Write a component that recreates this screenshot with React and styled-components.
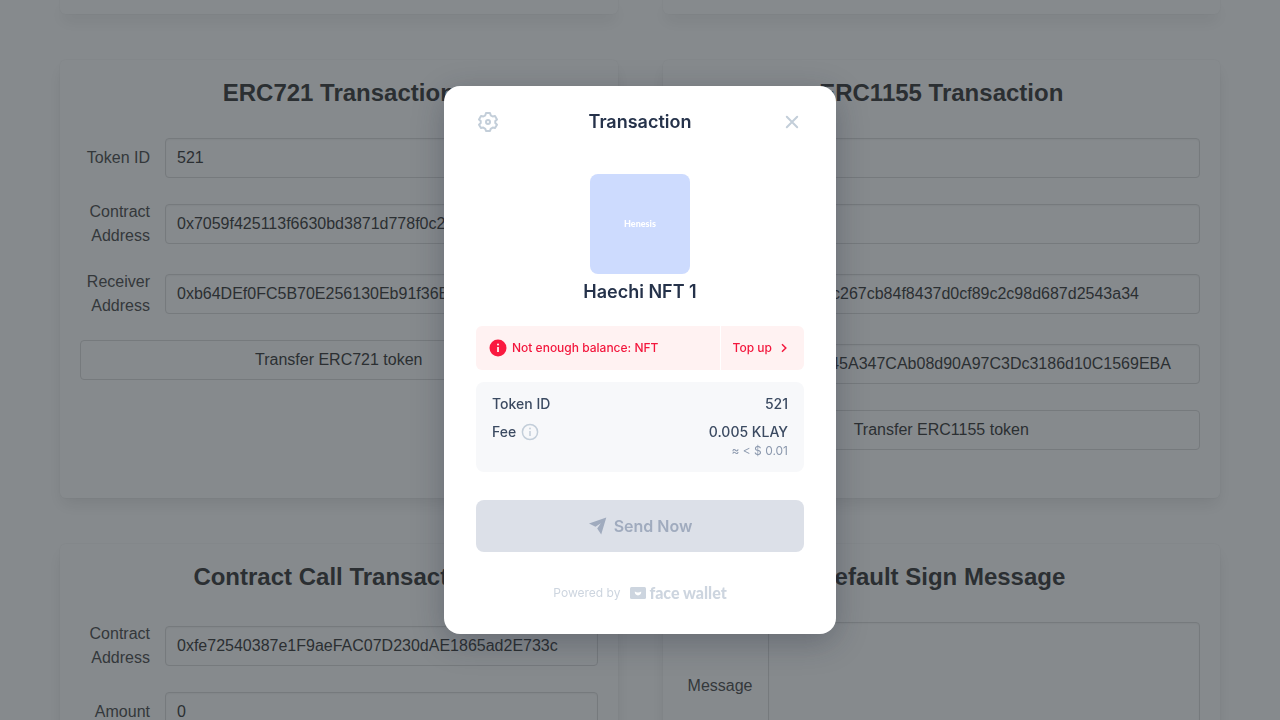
import React from "react";
import styled, { createGlobalStyle } from "styled-components";

const GlobalStyle = createGlobalStyle`
  *, *::before, *::after { box-sizing: border-box; }
  body {
    margin: 0;
    background: #ffffff;
    color: #4a4a4a;
    font-family: "Liberation Sans", Arial, sans-serif;
    font-size: 16px;
    line-height: 24px;
  }
  button, input, textarea { font: inherit; margin: 0; }
  h1, h2, p, dl, dd { margin: 0; }
`;

const Page = styled.main`
  height: 100vh;
  overflow: hidden;
  padding: 0 60px;
`;

const Grid = styled.div`
  display: grid;
  grid-template-columns: repeat(2, minmax(0, 1fr));
  gap: 46px 45px;
`;

const Card = styled.section`
  padding: 20px 20px 48px;
  border-radius: 6px;
  background: #ffffff;
  box-shadow: 0 8px 16px -2px rgba(10, 10, 10, 0.1), 0 0 0 1px rgba(10, 10, 10, 0.02);
`;

const CardEnd = styled(Card)`
  height: 14px;
  padding: 0;
  border-radius: 0 0 6px 6px;
`;

const CardTitle = styled.h2`
  margin-bottom: 32px;
  color: #363636;
  font-size: 24px;
  font-weight: 700;
  line-height: 26px;
  text-align: center;
`;

const Fields = styled.div`
  display: flex;
  flex-direction: column;
  gap: 22px;
`;

const Field = styled.div`
  display: flex;
  align-items: center;
  gap: 15px;
`;

const Label = styled.label`
  flex: 0 0 70px;
  text-align: right;
`;

const Input = styled.input`
  flex: 1;
  min-width: 0;
  height: 40px;
  padding: 0 11px;
  border: 1px solid #dbdbdb;
  border-radius: 4px;
  background: #ffffff;
  color: #363636;
  box-shadow: inset 0 1px 2px rgba(10, 10, 10, 0.05);
`;

const TextArea = styled(Input)`
  height: 128px;
  padding: 10px 11px;
  resize: none;
`;

const PlainButton = styled.button`
  height: 40px;
  padding: 0 16px;
  border: 1px solid #dbdbdb;
  border-radius: 4px;
  background: #ffffff;
  color: #363636;
`;

const Overlay = styled.div`
  position: fixed;
  inset: 0;
  display: flex;
  align-items: center;
  justify-content: center;
  background: rgba(35, 41, 48, 0.55);
`;

const Modal = styled.div`
  width: 392px;
  padding: 24px 32px 31px;
  border-radius: 16px;
  background: #ffffff;
  box-shadow: 0 8px 32px rgba(28, 32, 52, 0.3);
  color: #3b4a61;
  font-family: Inter, sans-serif;
  font-size: 14px;
  font-weight: 500;
  line-height: 20px;
`;

const Header = styled.header`
  display: flex;
  align-items: center;
  justify-content: space-between;
  margin-bottom: 40px;
`;

const Heading = styled.h1`
  color: #25324a;
  font-size: 18px;
  font-weight: 600;
  line-height: 24px;
  text-align: center;
`;

const IconButton = styled.button`
  display: flex;
  padding: 0;
  border: 0;
  background: none;
  color: #c3ced9;
`;

const Token = styled.div`
  display: flex;
  flex-direction: column;
  align-items: center;
  gap: 6px;
  margin-bottom: 22px;
`;

const Thumb = styled.div`
  display: flex;
  align-items: center;
  justify-content: center;
  width: 100px;
  height: 100px;
  border-radius: 8px;
  background: #cddbfe;
  color: #ffffff;
  font-family: Lato, sans-serif;
  font-size: 9px;
  font-weight: 900;
`;

const Alert = styled.div`
  display: flex;
  height: 44px;
  margin-bottom: 12px;
  border-radius: 6px;
  background: #fff2f2;
  color: #f3173d;
  font-size: 12px;
`;

const AlertText = styled.p`
  display: flex;
  flex: 1;
  align-items: center;
  gap: 4px;
  padding-left: 12px;
  line-height: 20px;
`;

const TopUp = styled.button`
  display: flex;
  align-items: center;
  gap: 4px;
  padding: 0 12px;
  border: 0;
  border-left: 1px solid #ffffff;
  background: none;
  color: inherit;
`;

const Details = styled.dl`
  display: flex;
  flex-direction: column;
  gap: 8px;
  margin-bottom: 28px;
  padding: 12px 16px;
  border-radius: 8px;
  background: #f7f8fa;
`;

const DetailRow = styled.div`
  display: flex;
  justify-content: space-between;
`;

const Term = styled.dt`
  display: flex;
  align-items: center;
  gap: 4px;
  height: 20px;
`;

const Value = styled.dd`
  text-align: right;
`;

const Fiat = styled.p`
  color: #8b98ad;
  font-size: 12px;
  font-weight: 400;
  line-height: 18px;
`;

const SendButton = styled.button`
  display: flex;
  align-items: center;
  justify-content: center;
  gap: 6px;
  width: 100%;
  height: 52px;
  margin-bottom: 31px;
  border: 0;
  border-radius: 8px;
  background: #dce0e8;
  color: #a0abbe;
  font-size: 16px;
  font-weight: 600;
`;

const Footer = styled.footer`
  display: flex;
  align-items: center;
  justify-content: center;
  gap: 10px;
  color: #cdd5df;
  font-size: 12px;
  font-weight: 400;
`;

const Brand = styled.span`
  display: flex;
  align-items: center;
  gap: 3px;
  font-family: Lato, sans-serif;
  font-size: 16px;
  font-weight: 900;
`;

const GearIcon = () => (
  <svg width="24" height="24" viewBox="0 0 24 24" fill="none" stroke="currentColor" strokeWidth="2" strokeLinejoin="round">
    <path d="M10 3h4l.7 2.3 2 1.2 2.3-.5 2 3.4L19.300 11v2l1.700 1.700-2 3.400-2.300-.5-2 1.200L14 21h-4l-.7-2.200-2-1.200-2.300.5-2-3.400L4.700 13v-2L3 9.400 5 6l2.300.5 2-1.200z" />
    <circle cx="12" cy="12" r="2" />
  </svg>
);

const CloseIcon = () => (
  <svg width="24" height="24" viewBox="0 0 24 24" fill="none" stroke="currentColor" strokeWidth="2" strokeLinecap="round">
    <path d="M6.800 6.800l10.400 10.400M17.200 6.800L6.800 17.200" />
  </svg>
);

const AlertIcon = () => (
  <svg width="20" height="20" viewBox="0 0 20 20">
    <circle cx="10" cy="10" r="8.500" fill="#fa1a40" />
    <path d="M10 9v5" stroke="#fff" strokeWidth="1.700" />
    <circle cx="10" cy="6.500" r="1" fill="#fff" />
  </svg>
);

const InfoIcon = () => (
  <svg width="20" height="20" viewBox="0 0 20 20" fill="none" stroke="#c3ced9" strokeWidth="1.500">
    <circle cx="10" cy="10" r="7.600" />
    <path d="M10 9v5" />
    <circle cx="10" cy="6.500" r=".9" fill="#c3ced9" stroke="none" />
  </svg>
);

const ChevronIcon = () => (
  <svg width="16" height="16" viewBox="0 0 16 16" fill="none" stroke="currentColor" strokeWidth="1.500">
    <path d="M6 4.300L9.800 8 6 11.700" />
  </svg>
);

const SendIcon = () => (
  <svg width="20" height="20" viewBox="0 0 20 20" fill="currentColor">
    <path d="M18.300 1.600L1 7.500l6.500 3.300 5.300-3.500-3.600 5.200 4 6.100z" />
  </svg>
);

const FaceIcon = () => (
  <svg width="16" height="12" viewBox="0 0 16 12">
    <rect width="16" height="12" rx="1.500" fill="currentColor" />
    <path d="M4.800 4.600Q8 6.600 11.200 4.600A3.300 3.300 0 0 1 8 8.400 3.300 3.300 0 0 1 4.800 4.600z" fill="#fff" />
  </svg>
);

function TextField({ id, label, value }) {
  return (
    <Field>
      <Label htmlFor={id}>{label}</Label>
      <Input id={id} defaultValue={value} />
    </Field>
  );
}

export default function App() {
  return (
    <>
      <GlobalStyle />
      <Page>
        <Grid>
          <CardEnd />
          <CardEnd />
          <Card>
            <CardTitle>ERC721 Transaction</CardTitle>
            <Fields>
              <TextField id="nft-id" label="Token ID" value="521" />
              <TextField id="nft-contract" label="Contract Address" value="0x7059f425113f6630bd3871d778f0c2b5d9f1a3e4" />
              <TextField id="nft-receiver" label="Receiver Address" value="0xb64DEf0FC5B70E256130Eb91f36B628D9c1F3a07" />
              <PlainButton type="button">Transfer ERC721 token</PlainButton>
            </Fields>
          </Card>
          <Card>
            <CardTitle>ERC1155 Transaction</CardTitle>
            <Fields>
              <TextField id="multi-id" label="Token ID" value="1" />
              <TextField id="multi-amount" label="Token Amount" value="1" />
              <TextField id="multi-contract" label="Contract Address" value="0x04e8c267cb84f8437d0cf89c2c98d687d2543a34" />
              <TextField id="multi-receiver" label="Receiver Address" value="0xccdb45A347CAb08d90A97C3Dc3186d10C1569EBA" />
              <PlainButton type="button">Transfer ERC1155 token</PlainButton>
            </Fields>
          </Card>
          <Card>
            <CardTitle>Contract Call Transaction</CardTitle>
            <Fields>
              <TextField id="call-contract" label="Contract Address" value="0xfe72540387e1F9aeFAC07D230dAE1865ad2E733c" />
              <TextField id="call-amount" label="Amount" value="0" />
            </Fields>
          </Card>
          <Card>
            <CardTitle>Default Sign Message</CardTitle>
            <Fields>
              <Field>
                <Label htmlFor="message">Message</Label>
                <TextArea as="textarea" id="message" />
              </Field>
            </Fields>
          </Card>
        </Grid>
      </Page>
      <Overlay>
        <Modal role="dialog" aria-modal="true" aria-labelledby="dialog-title">
          <Header>
            <IconButton type="button" aria-label="Settings"><GearIcon /></IconButton>
            <Heading id="dialog-title">Transaction</Heading>
            <IconButton type="button" aria-label="Close"><CloseIcon /></IconButton>
          </Header>
          <Token>
            <Thumb>Henesis</Thumb>
            <Heading as="h2">Haechi NFT 1</Heading>
          </Token>
          <Alert role="alert">
            <AlertText><AlertIcon />Not enough balance: NFT</AlertText>
            <TopUp type="button">Top up<ChevronIcon /></TopUp>
          </Alert>
          <Details>
            <DetailRow>
              <Term>Token ID</Term>
              <Value>521</Value>
            </DetailRow>
            <DetailRow>
              <Term>Fee<InfoIcon /></Term>
              <Value>
                0.005 KLAY
                <Fiat>≈ &lt; $ 0.01</Fiat>
              </Value>
            </DetailRow>
          </Details>
          <SendButton type="button" disabled><SendIcon />Send Now</SendButton>
          <Footer>
            Powered by
            <Brand><FaceIcon />face wallet</Brand>
          </Footer>
        </Modal>
      </Overlay>
    </>
  );
}
